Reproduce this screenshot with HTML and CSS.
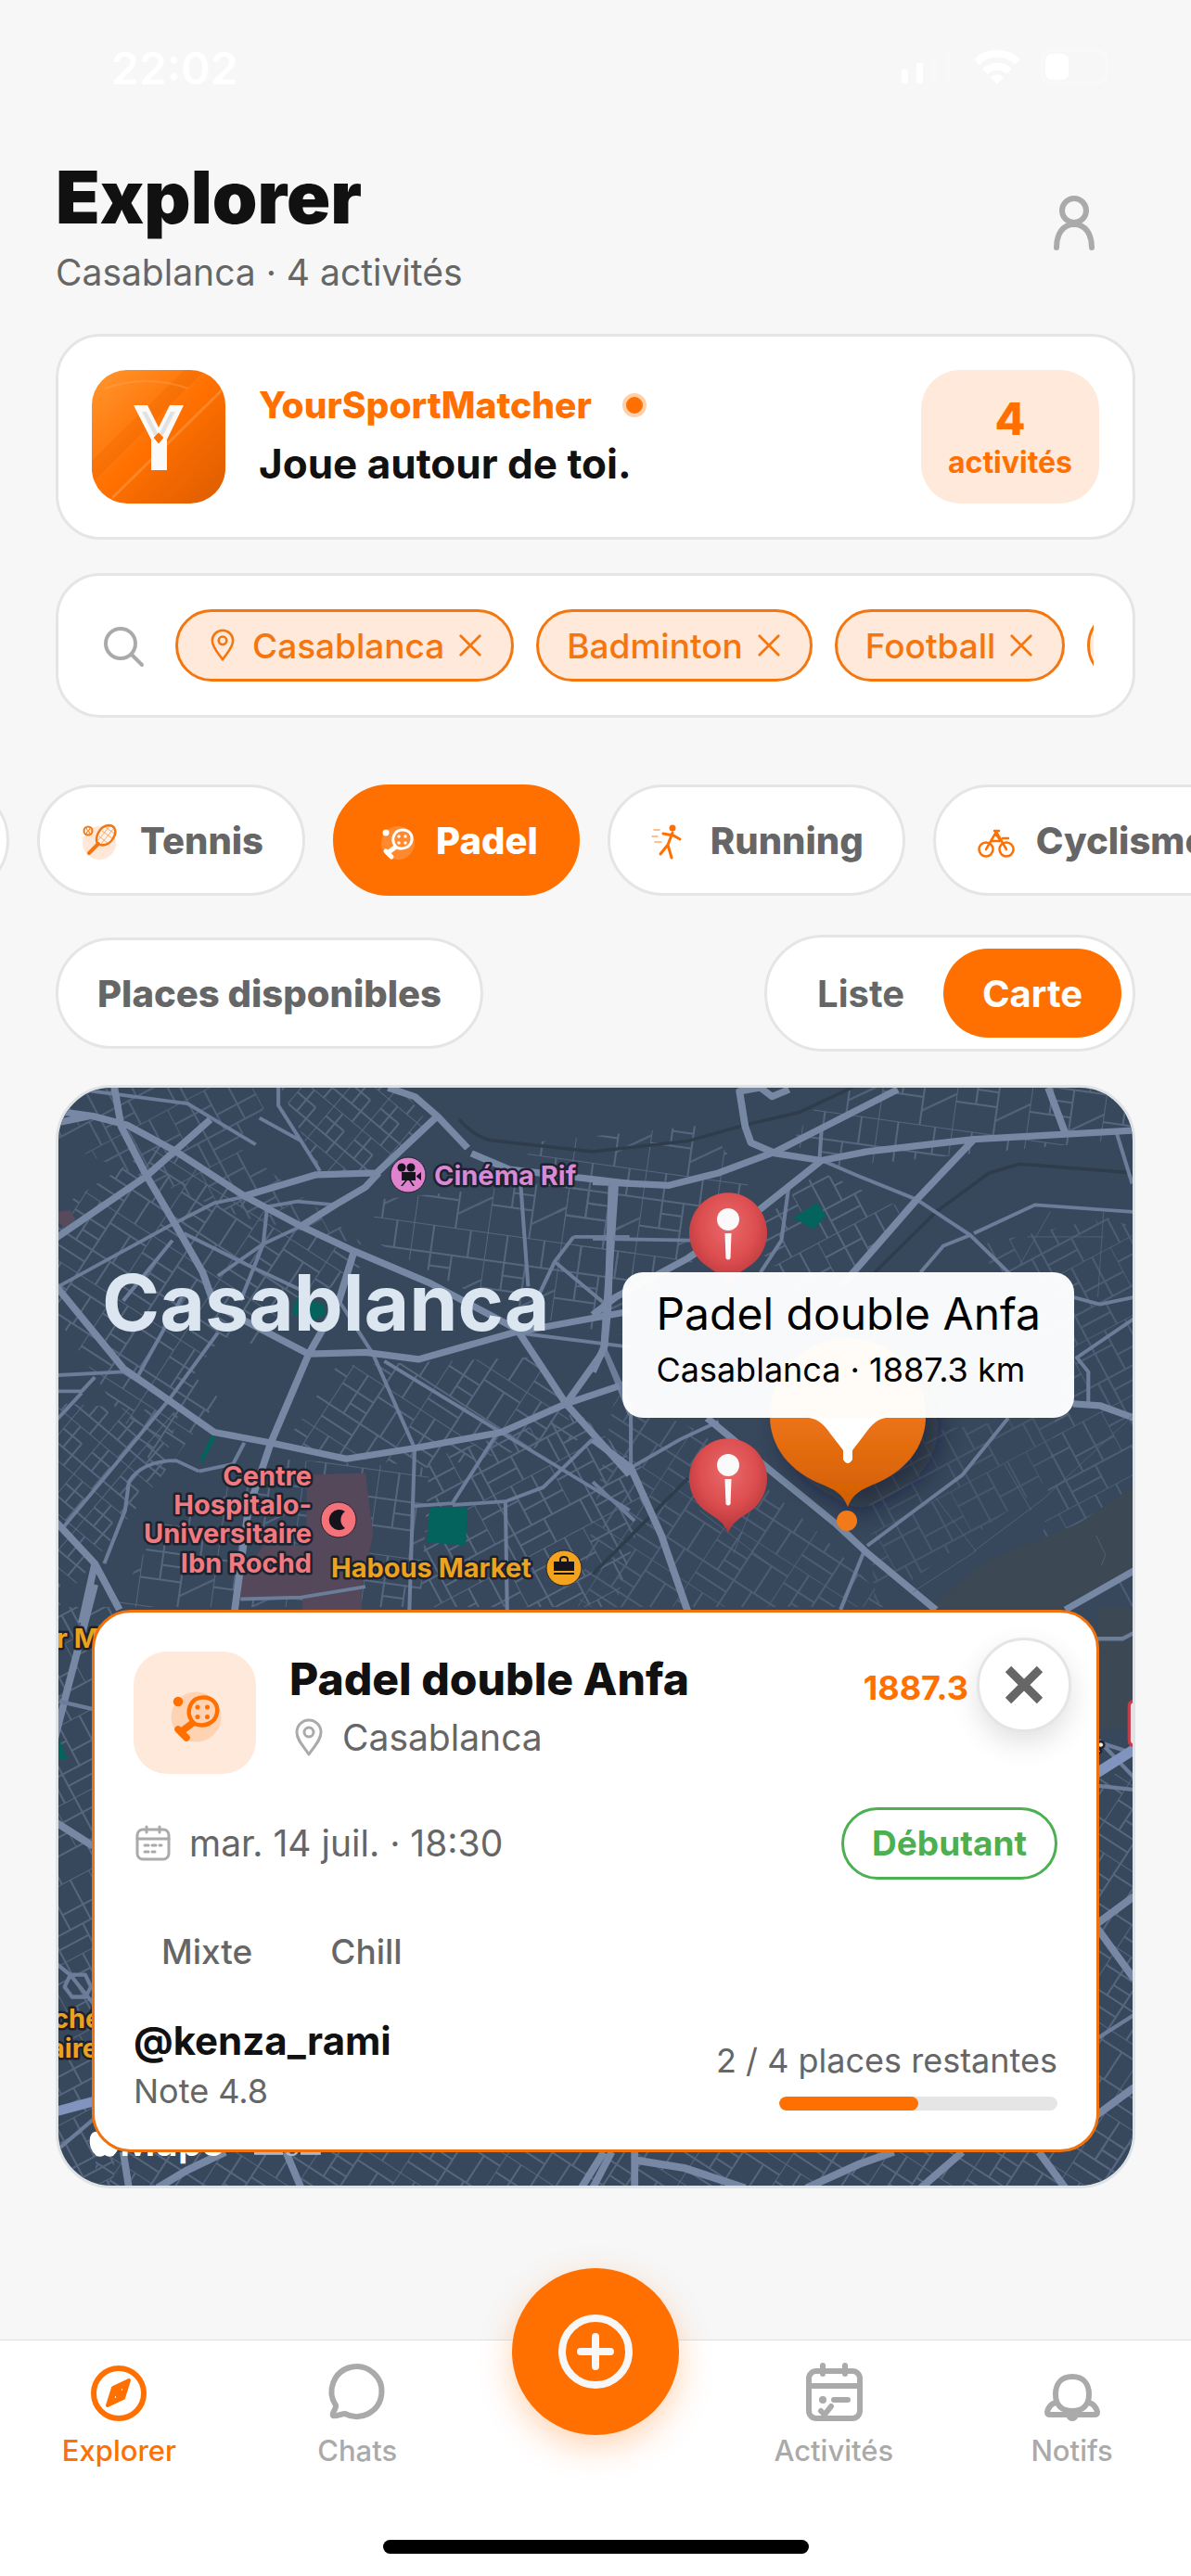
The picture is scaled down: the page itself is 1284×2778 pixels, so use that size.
FILE: index.html
```html
<!DOCTYPE html>
<html lang="fr">
<head>
    <meta charset="UTF-8">
    <meta name="viewport" content="width=device-width, initial-scale=1.0">
    <title>YourSportMatcher - Explorer</title>
    <link rel="stylesheet" href="styles.css">
</head>
<body>

    <!-- Shared icons -->
    <svg class="sprite" aria-hidden="true">
        <symbol id="icon-close" viewBox="0 0 30 30">
            <path d="M4 4l22 22M26 4L4 26" fill="none" stroke="currentColor" stroke-width="3" stroke-linecap="round"/>
        </symbol>
        <symbol id="icon-pin" viewBox="0 0 36 42">
            <path d="M18 39C13 31 5 24 5 15a13 13 0 0 1 26 0c0 9-8 16-13 24z" fill="none" stroke="currentColor" stroke-width="3" stroke-linejoin="round"/>
            <circle cx="18" cy="15" r="5" fill="none" stroke="currentColor" stroke-width="3"/>
        </symbol>
        <symbol id="icon-padel" viewBox="0 0 48 48">
            <circle cx="25" cy="27" r="18" fill="currentColor" opacity=".18"/>
            <circle cx="12" cy="16" r="3.5" fill="currentColor"/>
            <path d="M22 30c-5-7-1-17 8-17 7 0 11 5 10 11-1 7-9 11-16 8z" fill="none" stroke="currentColor" stroke-width="3"/>
            <path d="M23 31L15 37" stroke="currentColor" stroke-width="5"/>
            <path d="M12 36l6 6" stroke="currentColor" stroke-width="5" stroke-linecap="round"/>
            <g fill="currentColor"><circle cx="26" cy="20" r="1.7"/><circle cx="33" cy="20" r="1.7"/><circle cx="26" cy="27" r="1.7"/><circle cx="33" cy="27" r="1.7"/></g>
        </symbol>
    </svg>

    <div class="app">

        <div class="status-bar">
            <span class="clock">22:02</span>
            <svg class="status-icons" viewBox="0 0 230 48" fill="#fff">
                <rect x="2" y="25" width="7" height="15" rx="2"/>
                <rect x="18" y="18" width="7" height="22" rx="2"/>
                <rect x="33" y="11" width="7" height="29" rx="2" opacity=".15"/>
                <rect x="48" y="4" width="7" height="36" rx="2" opacity=".15"/>
                <g fill="none" stroke="#fff" stroke-width="8">
                    <path d="M83 17a31 31 0 0 1 44 0"/>
                    <path d="M92 27a19 19 0 0 1 26 0"/>
                </g>
                <path d="M105 41l-7-8a10 10 0 0 1 14 0z"/>
                <rect x="153" y="4" width="70" height="36" rx="11" fill="none" stroke="#fff" stroke-width="3" opacity=".3"/>
                <rect x="157" y="8" width="25" height="28" rx="7"/>
            </svg>
        </div>

        <header class="header">
            <div>
                <h1>Explorer</h1>
                <p>Casablanca · 4 activités</p>
            </div>
            <button class="profile-button" aria-label="Profil">
                <svg width="60" height="66" viewBox="0 0 60 66" fill="none" stroke="#aaa" stroke-width="6" stroke-linecap="round">
                    <circle cx="30" cy="20" r="13"/>
                    <path d="M11 60c0-15 7-25 19-25s19 10 19 25"/>
                </svg>
            </button>
        </header>

        <main class="content">

            <section class="card brand-card">
                <svg class="brand-logo" viewBox="0 0 144 144">
                    <defs>
                        <linearGradient id="brand" x1="0" y1="0" x2="1" y2="1">
                            <stop offset="0" stop-color="#ff962f"/>
                            <stop offset=".5" stop-color="#ff7000"/>
                            <stop offset="1" stop-color="#dd5c00"/>
                        </linearGradient>
                        <clipPath id="brand-clip"><rect width="144" height="144" rx="38"/></clipPath>
                    </defs>
                    <g clip-path="url(#brand-clip)">
                        <rect width="144" height="144" fill="url(#brand)"/>
                        <path d="M0 98L100 0h22L0 122z" fill="#e86300" opacity=".3"/>
                        <path d="M22 138L144 18" stroke="#ff9d4d" stroke-width="3" opacity=".5"/>
                        <path d="M14 20q45-16 90 0" fill="none" stroke="#ffb070" stroke-width="2" opacity=".3"/>
                        <path d="M45 38h15l12 24 12-24h15L81 75v33H64V75z" fill="#fafafa"/>
                        <path d="M54 45h5l13 25 13-25h5L74 76h-4z" fill="#e4e2e0"/>
                        <path d="M72 69l4 4-4 5-4-5z" fill="#ff7000" stroke="#ff7000" stroke-width="2"/>
                    </g>
                </svg>
                <div class="brand-text">
                    <div class="brand-name">YourSportMatcher <span class="live-dot"></span></div>
                    <div class="brand-tagline">Joue autour de toi.</div>
                </div>
                <div class="brand-count">
                    <strong>4</strong>
                    <span>activités</span>
                </div>
            </section>

            <section class="card search-card">
                <svg class="search-icon" viewBox="0 0 54 54" fill="none" stroke="#aaa" stroke-width="4" stroke-linecap="round">
                    <circle cx="25" cy="25" r="16"/>
                    <path d="M37 37l11 11"/>
                </svg>
                <div class="filters">
                    <button class="filter"><svg class="filter-pin"><use href="#icon-pin"/></svg>Casablanca<svg class="filter-close"><use href="#icon-close"/></svg></button>
                    <button class="filter">Badminton<svg class="filter-close"><use href="#icon-close"/></svg></button>
                    <button class="filter">Football<svg class="filter-close"><use href="#icon-close"/></svg></button>
                    <button class="filter filter-next" aria-label="Padel"></button>
                </div>
            </section>

            <div class="sports">
                <button class="pill sport sport-previous" aria-label="Football"></button>
                <button class="pill sport">
                    <svg viewBox="0 0 48 48" fill="none" stroke="#f5760e" stroke-width="2.5">
                        <circle cx="22" cy="27" r="18" fill="#ffe8d8" stroke="none"/>
                        <circle cx="10" cy="14" r="4.5" stroke-width="2"/>
                        <path d="M8 11q3 3 0 6M12 11q-3 3 0 6" stroke-width="1"/>
                        <path d="M20 28c-3-7 2-19 12-20 8 0 9 8 5 14-4 7-11 9-17 6z" fill="#fff3ea"/>
                        <path d="M22 20l10 8M25 14l12 9M29 10l9 7M24 28L37 12M21 24L33 9" stroke-width=".8" opacity=".7"/>
                        <path d="M21 28L11 38" stroke-width="4" stroke-linecap="round"/>
                    </svg>
                    Tennis
                </button>
                <button class="pill sport active">
                    <svg><use href="#icon-padel"/></svg>
                    Padel
                </button>
                <button class="pill sport">
                    <svg viewBox="0 0 48 48" fill="none" stroke="#ff7000" stroke-width="3" stroke-linecap="round" stroke-linejoin="round">
                        <circle cx="25" cy="11" r="3.5" fill="#ff7000" stroke="none"/>
                        <path d="M15 17l11 2 7 4M25 16l-5 13 4 14M20 29l-8 10"/>
                        <path d="M5 13h6M3 20h6M6 26h7" stroke-width="1.5" opacity=".6"/>
                    </svg>
                    Running
                </button>
                <button class="pill sport">
                    <svg viewBox="0 0 48 48" fill="none" stroke="#ff7000" stroke-width="2.5" stroke-linecap="round">
                        <circle cx="12" cy="34" r="7.5"/>
                        <circle cx="34" cy="34" r="7.5"/>
                        <path d="M12 34l11-19 11 19M18 25h10l-5-7M21 14h5M30 22h6"/>
                    </svg>
                    Cyclisme
                </button>
            </div>

            <div class="toolbar">
                <button class="pill places">Places disponibles</button>
                <div class="segment">
                    <button>Liste</button>
                    <button class="active">Carte</button>
                </div>
            </div>

            <section class="map">
                <svg class="map-canvas" viewBox="0 0 1158 1184" preserveAspectRatio="xMidYMid slice">
                    <defs>
                        <pattern id="streets-a" width="86" height="78" patternUnits="userSpaceOnUse" patternTransform="rotate(33)">
                            <path d="M0 0H86M0 22H40M0 49H86M0 0V78M19 0V49M40 0V78M63 49V78M40 14H86M66 14V49M19 36H40M0 64H40" class="street"/>
                        </pattern>
                        <pattern id="streets-b" width="92" height="76" patternUnits="userSpaceOnUse" patternTransform="rotate(-28)">
                            <path d="M0 0H92M0 18H45M0 48H92M0 0V48M24 0V76M45 0V48M70 0V48M45 30H92M12 48V76M60 48V76M24 62H60" class="street"/>
                        </pattern>
                        <pattern id="streets-c" width="80" height="90" patternUnits="userSpaceOnUse" patternTransform="rotate(8)">
                            <path d="M0 0H80M0 30H80M0 60H45M0 0V90M22 0V60M45 30V90M62 0V30M45 75L80 52M22 44H45" class="street"/>
                        </pattern>
                        <pattern id="streets-d" width="40" height="44" patternUnits="userSpaceOnUse" patternTransform="rotate(40)">
                            <path d="M0 0H40M0 14H26M0 30H40M0 0V44M13 0V30M26 14V44" class="street"/>
                        </pattern>
                        <radialGradient id="red-pin" cx=".5" cy=".35" r=".65">
                            <stop offset="0" stop-color="#e96a6b"/>
                            <stop offset=".55" stop-color="#dd4e50"/>
                            <stop offset="1" stop-color="#b33438"/>
                        </radialGradient>
                        <linearGradient id="orange-pin" x1="0" y1="0" x2="0" y2="1">
                            <stop offset=".4" stop-color="#f0761a"/>
                            <stop offset="1" stop-color="#d25e00"/>
                        </linearGradient>
                        <filter id="pin-shadow" x="-40%" y="-40%" width="200%" height="200%">
                            <feDropShadow dx="14" dy="14" stdDeviation="14" flood-color="#0c1522" flood-opacity=".5"/>
                        </filter>
                        <g id="red-marker">
                            <path d="M0 58C-5 46-12 43-22 36A42 43 0 1 1 22 36C12 43 5 46 0 58z" fill="url(#red-pin)"/>
                            <circle cx="0" cy="-15" r="12" fill="#fafafa"/>
                            <path d="M-3.500 0H3.500L2.500 27Q0 30-2.500 27z" fill="#fafafa"/>
                        </g>
                    </defs>

                    <!-- Neighbourhood streets -->
                    <path d="M0 130L110 60L330 190L230 260L110 420L0 250z" fill="url(#streets-a)"/>
                    <path d="M0 0H240L190 60L330 170L200 140L0 60z" fill="url(#streets-b)" opacity=".8"/>
                    <path d="M240 0H370L400 40L340 90H280z" fill="url(#streets-d)"/>
                    <path d="M350 120L560 100L620 160V270L480 240L330 160z" fill="url(#streets-c)"/>
                    <path d="M300 300L520 290L560 380L400 410L240 390z" fill="url(#streets-a)"/>
                    <path d="M0 340L130 350L110 420L0 560z" fill="url(#streets-d)"/>
                    <path d="M110 470L230 400L400 410L390 560H60z" fill="url(#streets-c)"/>
                    <path d="M400 400L560 350L640 420L600 560H390z" fill="url(#streets-b)"/>
                    <path d="M500 60L700 40L760 130L640 220L560 180z" fill="url(#streets-c)"/>
                    <path d="M830 0H1158V55L840 85L790 60z" fill="url(#streets-c)"/>
                    <path d="M820 90L910 130L860 200L800 220L740 160z" fill="url(#streets-b)"/>
                    <path d="M990 170L1130 140L1158 150V560L1060 500L1080 300z" fill="url(#streets-b)" opacity=".7"/>
                    <path d="M600 330L690 370L820 480L900 560H560z" fill="url(#streets-a)" opacity=".7"/>
                    <path d="M870 380L1090 350L1060 430L880 560z" fill="url(#streets-b)" opacity=".5"/>
                    <path d="M0 560H60V1184H0z" fill="url(#streets-b)"/>
                    <path d="M40 1140H1158V1184H40z" fill="url(#streets-a)"/>
                    <path d="M1110 740H1158V1184H1110z" fill="url(#streets-a)"/>

                    <!-- Open land, parks, hospital grounds -->
                    <path d="M1158 430L1100 470L1000 510L940 560H1080L1158 520zM1120 560H1158V690H1120z" fill="#3c4853"/>
                    <g transform="translate(-24 -23) scale(.408 .383)">
                        <path d="M715 1150L870 1145L890 1320L860 1465V1568H700L705 1495L540 1500V1440L600 1350H715z" fill="#54485a"/>
                        <path d="M50 410L90 405L108 440L80 455L50 435z" fill="#574a5c"/>
                        <path d="M1040 1240H1140L1135 1350L1032 1340zM690 650L760 670L765 700L720 722L675 695zM462 1040L475 1045L440 1115L432 1110z" fill="#05635d"/>
                        <path d="M450 820L490 760L715 820L610 940L500 950L415 870z" fill="#37475c"/>
                    </g>
                    <path d="M792 140L818 124L828 138L814 153zM0 700L10 725H0z" fill="#05635d"/>

                    <!-- Railways -->
                    <g transform="translate(576 -23) scale(.411 .383)" class="railway">
                        <path d="M-350 150Q-300 210-250 210L0 240L250 210L400 165L540 130L680 60M1420 300L1120 275L1040 300L900 410L740 580M250 1160L0 1430"/>
                    </g>

                    <!-- Avenues, west side -->
                    <g transform="translate(-24 -23) scale(.408 .383)">
                        <path class="road" d="M80 60L400 105L580 220M590 145L700 210L750 295M640 60V110L700 210M50 625L350 450L470 385L560 365M610 395L690 380L790 390M700 450L600 500L480 590M390 470L560 560L700 630M610 400L600 500L540 660M50 870L230 860L350 940M50 915H120L155 875M120 920L50 1000M480 750L350 940L70 1300M360 490L230 660M390 640L270 870M430 1140L370 1110Q280 1110 245 1170L235 1250L180 1400M430 1140L520 1120L550 1060M890 810L1000 1075L985 1568M920 830L1220 1025L1568 1250M800 660L890 810M1220 1030L1100 1230L1000 1238M1100 1235L1240 1225L1245 1568M1240 1225L1340 1185L1470 1050M1280 330L1300 620M1270 750L1568 790M1420 480L1370 550L1510 675M1420 480H1568M1370 550L1330 640M1500 800L1568 980M540 1500L700 1495L870 1465"/>
                        <path class="avenue" d="M205 50L225 170L290 305L370 450L440 580L470 670L540 710L720 810M50 125L150 140L240 165L370 240L550 365L700 450L840 520L1040 610L1270 740M50 160L140 140M50 485L290 310L460 150M550 365L740 305L900 300L1060 140M930 60L1000 85L1060 140L1140 230M1150 245L1250 290L1568 330M700 450L790 390L870 340L905 300M840 520L800 660L720 810L620 1060L560 1250L520 1568M720 810L870 805L1010 825L1260 750L1568 690M1270 740L1400 950L1568 1150M1530 330L1500 800L1400 950L1568 890M50 615L230 850L350 940L470 1030L620 1060L820 1105L1000 1075L1230 1030L1400 950M50 1280L155 1400L120 1568M155 1400L220 1530"/>
                    </g>

                    <!-- Avenues, east side -->
                    <g transform="translate(576 -23) scale(.411 .383)">
                        <path class="road" d="M590 260L700 310L850 375L990 475L1100 590M1000 470L1160 390L1420 410M990 475L920 505L860 580M1375 190L1415 330M600 180L595 260M515 330L495 490L440 580M30 790L100 960V1130L230 1050L330 1000M720 1350L970 1150L1090 990M710 1370L650 1530M1260 650L1330 670L1420 650M1420 710L1270 820L1300 860V950M0 485L260 490M0 1170L110 1280"/>
                        <path class="avenue" d="M515 65L470 85L440 60L385 70L400 170L415 215L480 245L600 265L720 240L1000 205L1420 180M0 325L200 335L330 300L480 240L800 65M1000 205L850 375L700 560L650 620M600 265L430 410L250 540L60 650L0 700M50 330L40 680L30 790L0 860M0 1050L100 1130L180 1320L260 1568M1195 60L1240 190M300 990L480 1150L640 1290L720 1370L900 1530M1240 1530L1420 1420M1260 950L1330 955L1420 990"/>
                        <path class="street" stroke-width="4" d="M900 1215L1005 1365L840 1480M1080 1120L1150 1250M1420 980L1280 1120L1180 1220L1000 1365M1320 1320L1345 1375L1335 1405M1140 480H1340M1120 560L1200 410M1340 410L1325 650M450 1150L370 1370M280 1250L460 1400"/>
                    </g>

                    <!-- Roads around the edges of the activity card -->
                    <g transform="translate(-24 527) scale(.408 .434)">
                        <path class="avenue" d="M155 20L80 290L50 400M50 610L150 670M230 1430L245 1520M500 1430L400 1475L320 1520M660 1430L700 1520M1500 1430L1440 1520"/>
                        <path class="road" d="M60 310L150 330M50 960L90 990L150 1060M50 1430L150 1350M90 990L130 990L145 1020L130 1045L95 1045L75 1020z"/>
                        <path d="M50 1330L150 1305" stroke="#8094bd" stroke-width="24"/>
                    </g>
                    <g transform="translate(576 527) scale(.411 .434)">
                        <path class="avenue" d="M1320 865L1420 795M1320 870L1420 1000M1320 1340L1420 1270M50 1430L0 1520M110 1430V1520M110 1450L240 1470L400 1520M560 1520L700 1460L790 1430M860 1520L970 1430M1170 1430L1240 1520"/>
                        <path class="road" d="M1320 155H1390L1420 140M1320 410L1420 440M1320 520L1420 530M1320 1150L1420 1090M1320 400L1420 500"/>
                        <path d="M1320 490L1420 430" stroke="#8094bd" stroke-width="26"/>
                        <rect x="1407" y="310" width="60" height="110" rx="12" fill="#e8e3ea" stroke="#c43c48" stroke-width="8"/>
                    </g>

                    <!-- Labels -->
                    <g class="poi-labels">
                        <text x="47" y="262" class="city-label">Casablanca</text>
                        <text x="405" y="105" fill="#d98ad6">Cinéma Rif</text>
                        <g fill="#f07a80" text-anchor="end">
                            <text x="273" y="429">Centre</text>
                            <text x="273" y="460">Hospitalo-</text>
                            <text x="273" y="491">Universitaire</text>
                            <text x="273" y="523">Ibn Rochd</text>
                        </g>
                        <g fill="#eba31f">
                            <text x="294" y="528">Habous Market</text>
                            <text x="-2" y="604">r M</text>
                            <text x="-6" y="1014">ché</text>
                            <text x="-10" y="1046">aire</text>
                        </g>
                        <text x="1108" y="727" fill="#eee" font-size="26" transform="rotate(-38 1108 727)">A:</text>
                    </g>
                    <circle cx="377" cy="94" r="19" fill="#df83ce" stroke="#26222d"/>
                    <g fill="#15141c">
                        <circle cx="370" cy="86" r="4.500"/><circle cx="380" cy="86" r="4.500"/>
                        <path d="M370 91h15v9h-15zM386 95l5-4v9l-5-4zM374 100l-5 6h2l5-6zM380 100l4 6h-2l-4-6z"/>
                    </g>
                    <circle cx="302" cy="466" r="19" fill="#f4737a" stroke="#26222d"/>
                    <path d="M309 457a11 11 0 1 0 0 18a11 11 0 0 1 0-18z" fill="#15141c"/>
                    <circle cx="545" cy="518" r="19" fill="#f3a31c" stroke="#26222d"/>
                    <path d="M534 511h6v-2q0-4 5-4t5 4v2h6v10h-22zM542 511h6v-2q0-2-3-2t-3 2zM534 523h22v2h-22z" fill="#15141c" fill-rule="evenodd"/>

                    <!-- Apple Maps credit -->
                    <path d="M47 1128q-10-6-13 4-2 12 7 20 5 2 9-1 4 3 9 1 4-4 6-9-7-5-1-12-6-7-17-3z" fill="#fff"/>
                    <text x="66" y="1152" class="map-credit">Maps</text>
                    <text x="211" y="1146" class="map-legal">Légal</text>

                    <!-- Markers -->
                    <use href="#red-marker" x="722" y="157"/>
                    <use href="#red-marker" x="722" y="422"/>
                    <g filter="url(#pin-shadow)">
                        <path d="M851 452C846 438 836 433 824 428C790 415 767 388 767 354a84 84 0 0 1 168 0C935 388 912 415 878 428C866 433 856 438 851 452z" fill="url(#orange-pin)"/>
                    </g>
                    <circle cx="850" cy="467" r="11" fill="#f37a18"/>
                    <path d="M809 356C822 358 827 366 836 378L846 391V401Q851 409 856 401V391L866 378C875 366 880 358 892 356z" fill="#fff"/>
                </svg>

                <div class="callout">
                    <div class="callout-title">Padel double Anfa</div>
                    <div class="callout-subtitle">Casablanca · 1887.3 km</div>
                </div>

                <article class="activity">
                    <div class="activity-head">
                        <div class="activity-icon"><svg><use href="#icon-padel"/></svg></div>
                        <div class="activity-heading">
                            <h2>Padel double Anfa</h2>
                            <p class="activity-place"><svg><use href="#icon-pin"/></svg>Casablanca</p>
                        </div>
                        <span class="activity-distance">1887.3</span>
                    </div>
                    <div class="activity-row">
                        <div class="activity-date">
                            <svg viewBox="0 0 42 42" fill="none" stroke="#aaa" stroke-width="3" stroke-linecap="round">
                                <rect x="4" y="6" width="34" height="32" rx="6"/>
                                <path d="M4 16h34M14 3v6M28 3v6M12 23h4M20 23h4M28 23h2M12 30h4M20 30h3"/>
                            </svg>
                            <time>mar. 14 juil. · 18:30</time>
                        </div>
                        <span class="level">Débutant</span>
                    </div>
                    <div class="tags">
                        <span>Mixte</span>
                        <span>Chill</span>
                    </div>
                    <div class="activity-row activity-foot">
                        <div>
                            <div class="host">@kenza_rami</div>
                            <div class="rating">Note 4.8</div>
                        </div>
                        <div class="seats">
                            <div>2 / 4 places restantes</div>
                            <div class="seats-bar"><div class="seats-fill" style="width: 50%"></div></div>
                        </div>
                    </div>
                    <button class="activity-close" aria-label="Fermer">
                        <svg width="44" height="44" viewBox="0 0 44 44"><path d="M5 5l34 34M39 5L5 39" stroke="#666" stroke-width="9"/></svg>
                    </button>
                </article>
            </section>
        </main>

        <nav class="tab-bar">
            <div class="tabs">
                <a href="#" class="tab active">
                    <svg viewBox="0 0 72 72" fill="none" stroke="currentColor" stroke-width="6" stroke-linejoin="round">
                        <circle cx="36" cy="36" r="27"/>
                        <path d="M30 30l17-8-6 19-17 8z" fill="currentColor" stroke-width="4"/>
                        <path d="M39 32h1M32 40h1" stroke="#fff" stroke-width="2"/>
                    </svg>
                    Explorer
                </a>
                <a href="#" class="tab">
                    <svg viewBox="0 0 72 72" fill="none" stroke="currentColor" stroke-width="6" stroke-linejoin="round">
                        <path d="M13 49A27 27 0 1 1 23 58C19 58 14 61 10 60C8 57 14 53 13 49z"/>
                    </svg>
                    Chats
                </a>
                <button class="add-button" aria-label="Créer une activité">
                    <svg width="80" height="80" viewBox="0 0 80 80" fill="none" stroke="#f7f7f7" stroke-width="8" stroke-linecap="round">
                        <circle cx="40" cy="40" r="36"/>
                        <path d="M40 24v32M24 40h32"/>
                    </svg>
                </button>
                <a href="#" class="tab">
                    <svg viewBox="0 0 72 72" fill="none" stroke="currentColor" stroke-width="6" stroke-linecap="round" stroke-linejoin="round">
                        <rect x="9" y="12" width="55" height="51" rx="8"/>
                        <path d="M9 28h54M24 6v9M48 6v9M36 43h15M22 55l4 4 7-9"/>
                        <circle cx="24" cy="43" r="4" fill="currentColor" stroke="none"/>
                    </svg>
                    Activités
                </a>
                <a href="#" class="tab">
                    <svg viewBox="0 0 72 72" fill="none" stroke="currentColor" stroke-width="6" stroke-linejoin="round">
                        <path d="M36 18c-12 0-18 8-18 19s6 18 18 18 18-7 18-18-6-19-18-19z"/>
                        <path d="M18 46q-7 2-9 10 0 3 3 3h48q3 0 3-3-2-8-9-10"/>
                        <path d="M29 60q2 6 7 6t7-6z" fill="currentColor" stroke="none"/>
                    </svg>
                    Notifs
                </a>
            </div>
            <div class="home-indicator"></div>
        </nav>

    </div>

</body>
</html>
```

FILE: styles.css
```css
* {
    box-sizing: border-box;
}
body {
    font-family: Inter, "Liberation Sans", sans-serif;
    background-color: #f7f7f7;
    color: #111;
    margin: 0;
}
h1,
h2,
p {
    margin: 0;
}
button {
    font-family: inherit;
    border: none;
    padding: 0;
    cursor: pointer;
}
.sprite {
    position: absolute;
    width: 0;
    height: 0;
}
.app {
    min-height: 100vh;
    display: flex;
    flex-direction: column;
    overflow: hidden;
}

/* Status bar */
.status-bar {
    display: flex;
    justify-content: space-between;
    align-items: center;
    height: 141px;
    padding: 6px 84px 0 120px;
}
.clock {
    color: #fff;
    font-size: 48px;
    font-weight: 600;
}
.status-icons {
    width: 230px;
    height: 48px;
}

/* Header */
.header {
    display: flex;
    justify-content: space-between;
    align-items: center;
    padding: 24px 60px 42px;
}
.header h1 {
    font-size: 78px;
    line-height: 96px;
    font-weight: 900;
}
.header p {
    margin-top: 9px;
    font-size: 39px;
    line-height: 48px;
    color: #666;
}
.profile-button {
    width: 132px;
    height: 132px;
    background: none;
}

/* Content */
.content {
    padding: 0 60px;
}
.card {
    display: flex;
    align-items: center;
    background-color: #fff;
    border: 3px solid #e5e5e5;
    border-radius: 48px;
}
.brand-card {
    padding: 36px;
    gap: 36px;
}
.brand-logo {
    width: 144px;
    height: 144px;
}
.brand-text {
    flex: 1;
    padding-bottom: 3px;
}
.brand-name {
    display: flex;
    align-items: center;
    gap: 33px;
    color: #ff7000;
    font-size: 39px;
    line-height: 48px;
    font-weight: 800;
}
.live-dot {
    width: 26px;
    height: 26px;
    border: 4px solid #ffd0aa;
    border-radius: 50%;
    background-color: #ff7000;
}
.brand-tagline {
    margin-top: 12px;
    font-size: 44px;
    line-height: 54px;
    font-weight: 700;
}
.brand-count {
    display: flex;
    flex-direction: column;
    align-items: center;
    justify-content: center;
    width: 192px;
    height: 144px;
    border-radius: 42px;
    background-color: #ffe9da;
    color: #ff7000;
}
.brand-count strong {
    font-size: 48px;
    line-height: 54px;
    font-weight: 800;
}
.brand-count span {
    font-size: 32px;
    line-height: 39px;
    font-weight: 700;
}

/* Search */
.search-card {
    margin-top: 36px;
    padding: 36px 42px;
    gap: 30px;
}
.search-icon {
    flex: none;
    width: 54px;
    height: 54px;
}
.filters {
    display: flex;
    flex: 1;
    gap: 24px;
    overflow: hidden;
}
.filter {
    display: flex;
    flex: none;
    align-items: center;
    gap: 14px;
    height: 78px;
    padding: 0 30px;
    border: 3px solid #f5760e;
    border-radius: 39px;
    background-color: #ffe9da;
    color: #f5760e;
    font-size: 37px;
    font-weight: 500;
}
.filter-pin {
    width: 36px;
    height: 36px;
}
.filter-close {
    width: 28px;
    height: 28px;
}
.filter-next {
    width: 180px;
}

/* Sports */
.pill {
    height: 120px;
    border: 3px solid #e5e5e5;
    border-radius: 60px;
    background-color: #fff;
    color: #666;
    font-size: 40px;
    font-weight: 800;
}
.sports {
    display: flex;
    gap: 30px;
    margin: 72px -60px 0;
}
.sport {
    display: flex;
    flex: none;
    align-items: center;
    gap: 18px;
    padding: 0 42px;
}
.sport svg {
    width: 48px;
    height: 48px;
}
.sport.active {
    background-color: #ff7000;
    border-color: #ff7000;
    color: #fff;
}
.sport-previous {
    width: 240px;
    margin-left: -230px;
}

/* Filters and view switch */
.toolbar {
    display: flex;
    justify-content: space-between;
    align-items: center;
    margin-top: 42px;
}
.places {
    padding: 0 42px;
}
.segment {
    display: flex;
    padding: 12px;
    border: 3px solid #e5e5e5;
    border-radius: 63px;
    background-color: #fff;
}
.segment button {
    height: 96px;
    padding: 0 42px;
    border-radius: 48px;
    background: none;
    color: #666;
    font-size: 40px;
    font-weight: 700;
}
.segment .active {
    background-color: #ff7000;
    color: #fff;
}

/* Map */
.map {
    position: relative;
    height: 1190px;
    margin-top: 36px;
    border: 3px solid #dfe3e6;
    border-radius: 60px;
    background-color: #37475c;
    overflow: hidden;
}
.map-canvas {
    display: block;
    width: 100%;
    height: 100%;
}
.street {
    fill: none;
    stroke: #56667d;
    stroke-width: 2;
}
.road {
    fill: none;
    stroke: #6b7d98;
    stroke-width: 10;
    stroke-linejoin: round;
}
.avenue {
    fill: none;
    stroke: #7688a3;
    stroke-width: 19;
    stroke-linejoin: round;
}
.railway {
    fill: none;
    stroke: #2f3c4b;
    stroke-width: 9;
}
.poi-labels {
    font-size: 29px;
    font-weight: 700;
    paint-order: stroke;
    stroke: #1d222e;
    stroke-width: 5;
    stroke-linejoin: round;
}
.city-label {
    fill: #dbe6f0;
    stroke: none;
    font-size: 84px;
}
.map-credit {
    fill: #fff;
    font-size: 42px;
    font-weight: 600;
}
.map-legal {
    fill: #aeb8c6;
    font-size: 28px;
    text-decoration: underline;
}

.callout {
    position: absolute;
    top: 199px;
    right: 63px;
    height: 157px;
    padding: 15px 36px;
    border-radius: 22px;
    background-color: rgba(255, 255, 255, 0.97);
    color: #000;
    white-space: nowrap;
}
.callout-title {
    font-size: 48px;
    line-height: 60px;
}
.callout-subtitle {
    margin-top: 6px;
    font-size: 36px;
    line-height: 48px;
}

/* Activity card */
.activity {
    position: absolute;
    left: 36px;
    right: 36px;
    bottom: 36px;
    padding: 42px;
    border: 3px solid #f0720f;
    border-radius: 42px;
    background-color: #fff;
    color: #666;
    font-size: 36px;
    line-height: 48px;
}
.activity-head {
    display: flex;
    gap: 36px;
}
.activity-icon {
    display: flex;
    align-items: center;
    justify-content: center;
    width: 132px;
    height: 132px;
    border-radius: 36px;
    background-color: #ffe9da;
    color: #ff7000;
}
.activity-icon svg {
    width: 72px;
    height: 72px;
}
.activity-heading {
    flex: 1;
}
.activity h2 {
    color: #111;
    font-size: 48px;
    line-height: 60px;
    font-weight: 800;
}
.activity-place {
    display: flex;
    align-items: center;
    gap: 15px;
    margin-top: 9px;
    font-size: 39px;
}
.activity-place svg {
    width: 42px;
    height: 42px;
    color: #aaa;
}
.activity-distance {
    margin: 15px 96px 0 0;
    color: #ff7000;
    font-weight: 700;
}
.activity-row {
    display: flex;
    align-items: center;
    justify-content: space-between;
    margin-top: 36px;
}
.activity-date {
    display: flex;
    align-items: center;
    gap: 18px;
    font-size: 39px;
}
.activity-date svg {
    width: 42px;
    height: 42px;
}
.level {
    padding: 12px 30px;
    border: 3px solid #4caf50;
    border-radius: 39px;
    color: #4caf50;
    font-size: 37px;
    font-weight: 700;
    line-height: 48px;
}
.tags {
    display: flex;
    gap: 24px;
    margin-top: 39px;
    font-size: 37px;
    font-weight: 500;
}
.tags span {
    padding: 15px 30px;
}
.activity-foot {
    align-items: flex-end;
    margin-top: 27px;
}
.host {
    color: #111;
    font-size: 42px;
    line-height: 60px;
    font-weight: 700;
}
.rating {
    margin-bottom: -3px;
}
.seats {
    display: flex;
    flex-direction: column;
    align-items: flex-end;
    gap: 15px;
}
.seats-bar {
    width: 300px;
    height: 15px;
    border-radius: 8px;
    background-color: #e5e5e5;
    overflow: hidden;
}
.seats-fill {
    height: 100%;
    border-radius: 8px;
    background-color: #ff7000;
}
.activity-close {
    position: absolute;
    top: 27px;
    right: 27px;
    display: flex;
    align-items: center;
    justify-content: center;
    width: 102px;
    height: 102px;
    border: 3px solid #e5e5e5;
    border-radius: 50%;
    background-color: #fff;
    box-shadow: 0 12px 30px rgba(0, 0, 0, 0.12);
}

/* Tab bar */
.tab-bar {
    margin-top: auto;
    padding-bottom: 24px;
    border-top: 1px solid #e0e0e0;
    background-color: #fff;
}
.tabs {
    display: grid;
    grid-template-columns: repeat(5, 1fr);
    justify-items: center;
    height: 215px;
}
.tab {
    display: flex;
    flex-direction: column;
    align-items: center;
    gap: 6px;
    padding-top: 21px;
    color: #aaa;
    font-size: 31px;
    line-height: 39px;
    font-weight: 500;
    text-decoration: none;
}
.tab svg {
    width: 72px;
    height: 72px;
}
.tab.active {
    color: #ff7000;
}
.add-button {
    display: flex;
    align-items: center;
    justify-content: center;
    width: 180px;
    height: 180px;
    margin-top: -78px;
    border-radius: 50%;
    background-color: #ff7000;
    box-shadow: 0 12px 36px rgba(255, 112, 0, 0.3);
}
.home-indicator {
    width: 459px;
    height: 15px;
    margin: 0 auto;
    border-radius: 8px;
    background-color: #000;
}
```
